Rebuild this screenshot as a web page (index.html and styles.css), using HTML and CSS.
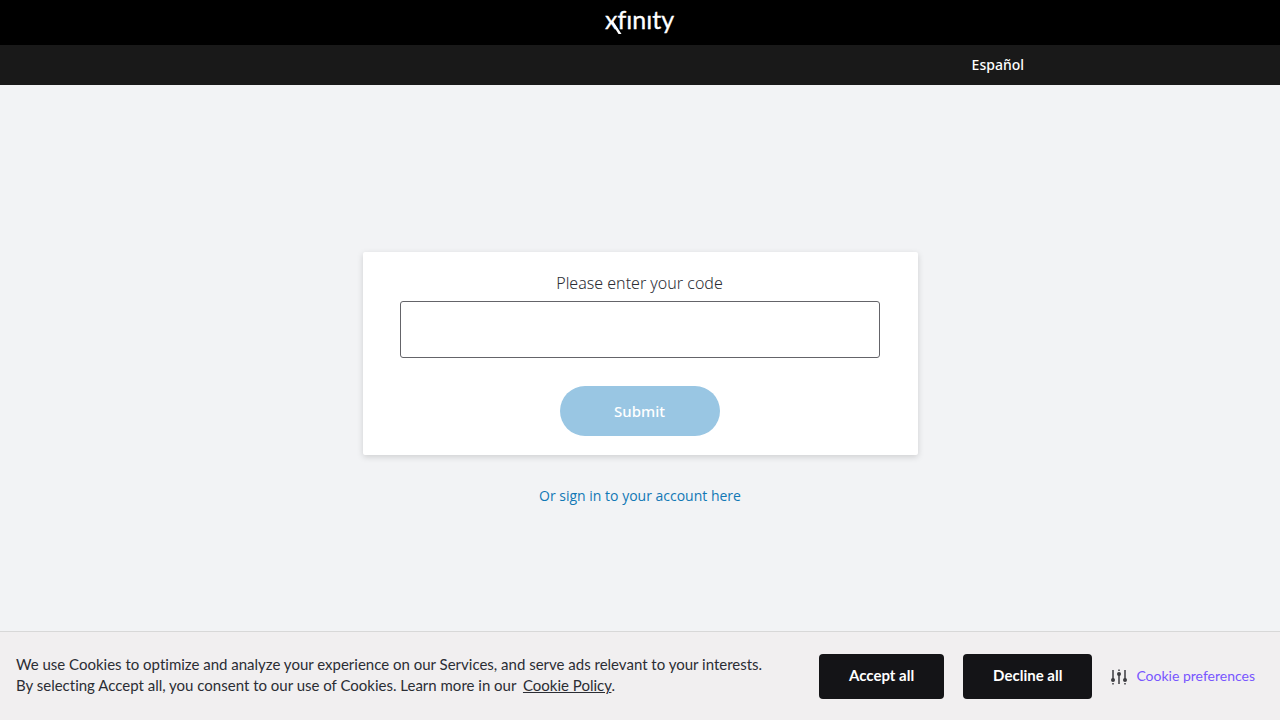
FILE: index.html
```html
<!DOCTYPE html>
<html lang="en">
<head>
<meta charset="utf-8">
<meta name="viewport" content="width=device-width, initial-scale=1">
<title>Xfinity</title>
<link rel="stylesheet" href="styles.css">
</head>
<body>
<header>
  <div class="brand">
    <svg class="logo" viewBox="0 0 76 36" role="img" aria-label="xfinity">
      <text class="wordmark" x="3" y="24">xfınıty</text>
      <path class="swash" d="M9 17L16.500 29H19.500L11 16Z"/>
    </svg>
  </div>
  <nav class="language"><a href="#">Español</a></nav>
</header>
<main class="content">
  <form class="card">
    <label class="prompt" for="code">Please enter your code</label>
    <input class="code" id="code" type="text" autocomplete="off">
    <button class="submit" type="submit" disabled>Submit</button>
  </form>
  <a class="sign-in" href="#">Or sign in to your account here</a>
</main>
<footer class="cookies">
  <p class="notice">We use Cookies to optimize and analyze your experience on our Services, and serve ads relevant to your interests. <br>By selecting Accept all, you consent to our use of Cookies. Learn more in our <a class="policy" href="#">Cookie Policy</a>.</p>
  <div class="choices">
    <button class="choice" type="button">Accept all</button>
    <button class="choice" type="button">Decline all</button>
    <button class="preferences" type="button">
      <svg class="sliders" viewBox="0 0 16 16" aria-hidden="true">
        <path d="M2 1v9M8 6v9M14 1v9M2 14v1.500M8 .5v1.500M14 14v1.500"/>
        <circle cx="2" cy="11" r="2"/><circle cx="8" cy="5" r="2"/><circle cx="14" cy="11" r="2"/>
      </svg>
      <span>Cookie preferences</span>
    </button>
  </div>
</footer>
</body>
</html>
```
FILE: styles.css
```css
* { box-sizing: border-box; }
body {
  margin: 0;
  min-height: 100vh;
  display: flex;
  flex-direction: column;
  background: #f2f3f5;
  color: #2b2d34;
  font-family: "Noto Sans", "Open Sans", sans-serif;
}
button, input { font: inherit; }
.brand {
  display: flex;
  justify-content: center;
  padding: 5px 0 4px;
  background: #000;
}
.logo { width: 76px; height: 36px; display: block; }
.wordmark { fill: #fff; stroke: #fff; stroke-width: 0.3; font: 25px Lato, sans-serif; font-variant-ligatures: none; }
.swash { fill: #fff; }
.language {
  display: flex;
  justify-content: flex-end;
  padding: 10px 20%;
  background: #191919;
}
.language a {
  color: #fff;
  font-size: 14px;
  font-weight: 500;
  line-height: 20px;
  text-decoration: none;
}
.content {
  flex: 1;
  display: flex;
  flex-direction: column;
  align-items: center;
  padding: 167px 16px 32px;
}
.card {
  width: 100%;
  max-width: 555px;
  display: flex;
  flex-direction: column;
  align-items: center;
  padding: 19px 38px 19px 37px;
  background: #fff;
  border-radius: 2px;
  box-shadow: 0 2px 6px rgba(0, 0, 0, 0.15);
}
.prompt { font-size: 16px; font-weight: 300; line-height: 24px; }
.code {
  width: 100%;
  height: 57px;
  margin: 6px 0 28px;
  padding: 0 16px;
  border: 1px solid #646469;
  border-radius: 3px;
  background: #fff;
}
.submit {
  width: 160px;
  height: 50px;
  border: 0;
  border-radius: 25px;
  background: #99c6e3;
  color: #fff;
  font-size: 15px;
  font-weight: 500;
}
.sign-in {
  margin-top: 31px;
  color: #1178b5;
  font-family: "Open Sans", "Noto Sans", sans-serif;
  font-size: 14px;
  line-height: 20px;
  text-decoration: none;
}
.cookies {
  display: flex;
  align-items: center;
  justify-content: space-between;
  gap: 24px;
  padding: 22px 25px 21px 16px;
  border-top: 1px solid #d8d8d8;
  background: #f1eff0;
  font-family: Lato, sans-serif;
  font-variant-ligatures: none;
}
.notice { margin: 0; padding-bottom: 3px; font-size: 15px; line-height: 21px; }
.policy { margin-left: 3px; color: inherit; }
.choices { display: flex; align-items: center; gap: 19px; flex-shrink: 0; }
.choice {
  height: 45px;
  padding: 0 30px 4px;
  border: 0;
  border-radius: 4px;
  background: #141417;
  color: #fff;
  font-size: 15px;
  font-weight: 700;
}
.preferences {
  display: flex;
  align-items: center;
  gap: 9px;
  padding: 0;
  border: 0;
  background: none;
  color: #7856ff;
  font-size: 14px;
}
.preferences span { padding-bottom: 2px; }
.sliders { width: 16px; height: 16px; fill: #3c3c40; stroke: #3c3c40; stroke-width: 1.5; }
.sliders circle { stroke: none; }
```
